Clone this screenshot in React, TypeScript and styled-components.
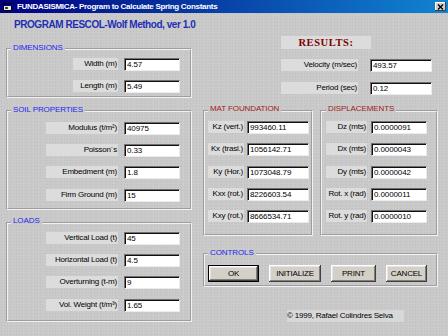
import styled, { createGlobalStyle } from 'styled-components';

interface IField {
  label: string;
  value: string;
}

const GlobalStyle = createGlobalStyle`
  html, body {
    margin: 0;
    padding: 0;
    background-color: #c9c9c9;
  }
  body {
    font-family: 'Liberation Sans', Arial, sans-serif;
  }
`;

const Window = styled.div`
  width: 448px;
  height: 336px;
  display: flex;
  flex-direction: column;
  overflow: hidden;
  background-color: #c9c9c9;
  background-image: radial-gradient(rgba(0, 0, 0, 0.05) 0.8px, transparent 1px),
    radial-gradient(rgba(255, 255, 255, 0.12) 0.8px, transparent 1px);
  background-size: 3px 3px, 5px 4px;
  background-position: 0 0, 1px 2px;
`;

const TitleBar = styled.div`
  flex: 0 0 13px;
  display: flex;
  align-items: center;
  gap: 5px;
  padding: 0 2px 0 3px;
  background: linear-gradient(to right, #000080, #1084d0);
  color: #fff;
  font-size: 8px;
  font-weight: bold;
  letter-spacing: -0.3px;
  white-space: nowrap;
`;

const TitleText = styled.span`
  flex: 1;
  line-height: 13px;
`;

const CloseButton = styled.div`
  width: 11px;
  height: 9px;
  display: flex;
  align-items: center;
  justify-content: center;
  background-color: #d4d0c8;
  box-shadow: inset -1px -1px #404040, inset 1px 1px #fff;
`;

const Body = styled.div`
  flex: 1;
  display: flex;
  gap: 11px;
  padding: 6px 10px 0 6px;
`;

const LeftColumn = styled.div`
  width: 186px;
  display: flex;
  flex-direction: column;
`;

const RightColumn = styled.div`
  width: 235px;
  display: flex;
  flex-direction: column;
`;

const Heading = styled.div`
  margin-left: 8px;
  height: 12px;
  line-height: 12px;
  font-size: 10px;
  font-weight: bold;
  letter-spacing: -0.45px;
  color: #1f2fb5;
  white-space: nowrap;
`;

const Group = styled.fieldset<{
  $mt: number;
  $pad: string;
  $gap: number;
  $align: string;
  $w?: number;
}>`
  margin: ${(props) => props.$mt}px 0 0;
  padding: ${(props) => props.$pad};
  width: ${(props) => (props.$w ? `${props.$w}px` : 'auto')};
  box-sizing: border-box;
  min-width: 0;
  border: 2px groove #f2f2f2;
  display: flex;
  flex-direction: column;
  align-items: ${(props) => props.$align};
  gap: ${(props) => props.$gap}px;
`;

const Legend = styled.legend<{ $color: string }>`
  margin: 0;
  padding: 0 2px 4px;
  font-size: 8px;
  line-height: 9px;
  letter-spacing: -0.1px;
  color: ${(props) => props.$color};
`;

const Row = styled.div<{ $gap: number }>`
  display: flex;
  align-items: flex-start;
  gap: ${(props) => props.$gap}px;
`;

const FieldLabel = styled.div<{ $w: number }>`
  width: ${(props) => props.$w}px;
  height: 12px;
  box-sizing: border-box;
  padding-right: 1px;
  background-color: #dcdcdc;
  text-align: right;
  line-height: 12px;
  font-size: 8px;
  letter-spacing: -0.2px;
  color: #000;
  white-space: nowrap;
  overflow: hidden;
`;

const Field = styled.input<{ $w: number }>`
  width: ${(props) => props.$w}px;
  height: 13px;
  box-sizing: border-box;
  margin: 0;
  padding: 0 0 0 2px;
  border: 1px solid;
  border-color: #707070 #ececec #ececec #707070;
  box-shadow: inset 1px 1px 0 #101010;
  background-color: #fff;
  font-family: 'Liberation Sans', Arial, sans-serif;
  font-size: 8px;
  letter-spacing: -0.1px;
  color: #000;
  outline: none;
`;

const Results = styled.div`
  margin: 17px 0 0 78px;
  display: flex;
  flex-direction: column;
  gap: 10px;
`;

const ResultsTitle = styled.div`
  width: 90px;
  height: 13px;
  background-color: #dcdcdc;
  text-align: center;
  line-height: 13px;
  font-family: 'Liberation Serif', 'Times New Roman', serif;
  font-size: 10.5px;
  font-weight: bold;
  letter-spacing: 0.6px;
  color: #800000;
`;

const GroupsRow = styled.div`
  margin-top: 9px;
  display: flex;
  gap: 7px;
`;

const Buttons = styled.div`
  display: flex;
  gap: 10px;
`;

const Button = styled.button<{ $w: number; $default?: boolean }>`
  width: ${(props) => props.$w}px;
  height: 17px;
  margin: 0;
  padding: 0;
  box-sizing: border-box;
  border: ${(props) => (props.$default ? '1px solid #000' : 'none')};
  background-color: #d4d0c8;
  box-shadow: inset -1px -1px #404040, inset 1px 1px #fff,
    inset -2px -2px #808080, inset 2px 2px #e4e4e4;
  font-family: 'Liberation Sans', Arial, sans-serif;
  font-size: 8px;
  letter-spacing: -0.2px;
  color: #000;
`;

const Copyright = styled.div`
  margin: 23px 0 0 84px;
  width: 117px;
  height: 12px;
  line-height: 12px;
  background-color: #d8d8d8;
  font-size: 8px;
  letter-spacing: -0.2px;
  color: #000;
  white-space: nowrap;
`;

const dimensions: IField[] = [
  { label: 'Width (m)', value: '4.57' },
  { label: 'Length (m)', value: '5.49' },
];

const results: IField[] = [
  { label: 'Velocity (m/sec)', value: '493.57' },
  { label: 'Period (sec)', value: '0.12' },
];

const soil: IField[] = [
  { label: 'Modulus (t/m²)', value: '40975' },
  { label: 'Poisson´s', value: '0.33' },
  { label: 'Embedment (m)', value: '1.8' },
  { label: 'Firm Ground (m)', value: '15' },
];

const loads: IField[] = [
  { label: 'Vertical Load (t)', value: '45' },
  { label: 'Horizontal Load (t)', value: '4.5' },
  { label: 'Overturning (t-m)', value: '9' },
  { label: 'Vol. Weight (t/m³)', value: '1.65' },
];

const mat: IField[] = [
  { label: 'Kz (vert.)', value: '993460.11' },
  { label: 'Kx (trasl.)', value: '1056142.71' },
  { label: 'Ky (Hor.)', value: '1073048.79' },
  { label: 'Kxx (rot.)', value: '8226603.54' },
  { label: 'Kxy (rot.)', value: '8666534.71' },
];

const displacements: IField[] = [
  { label: 'Dz (mts)', value: '0.0000091' },
  { label: 'Dx (mts)', value: '0.0000043' },
  { label: 'Dy (mts)', value: '0.0000042' },
  { label: 'Rot. x (rad)', value: '0.0000011' },
  { label: 'Rot. y (rad)', value: '0.0000010' },
];

const BLUE = '#2626f2';
const RED = '#a01c1c';
const ROW_GAP = 9.33;

function renderRows(
  fields: IField[],
  labelWidth: number,
  fieldWidth: number,
  gap: number
) {
  return fields.map((field) => (
    <Row key={field.label} $gap={gap}>
      <FieldLabel $w={labelWidth}>{field.label}</FieldLabel>
      <Field $w={fieldWidth} readOnly defaultValue={field.value} />
    </Row>
  ));
}

function App() {
  return (
    <>
      <GlobalStyle />
      <Window>
        <TitleBar>
          <svg width="9" height="8" viewBox="0 0 9 8">
            <rect x="0.5" y="0.5" width="8" height="7" fill="#e8e8e8" stroke="#000" />
            <rect x="1" y="1" width="7" height="2" fill="#000080" />
            <rect x="2" y="4" width="3" height="2" fill="#404040" />
          </svg>
          <TitleText>FUNDASISMICA- Program to Calculate Spring Constants</TitleText>
          <CloseButton>
            <svg width="7" height="6" viewBox="0 0 7 6">
              <path d="M1 0.5 L6 5.5 M6 0.5 L1 5.5" stroke="#000" strokeWidth="1.4" />
            </svg>
          </CloseButton>
        </TitleBar>

        <Body>
          <LeftColumn>
            <Heading>PROGRAM RESCOL-Wolf Method, ver 1.0</Heading>

            <Group $mt={11.5} $pad="2.5px 10px 2.5px 3px" $gap={ROW_GAP} $align="flex-end">
              <Legend $color={BLUE}>DIMENSIONS</Legend>
              {renderRows(dimensions, 45, 56, 6)}
            </Group>

            <Group $mt={7} $pad="4px 10px 6px 3px" $gap={ROW_GAP} $align="flex-end">
              <Legend $color={BLUE}>SOIL PROPERTIES</Legend>
              {renderRows(soil, 72, 56, 6)}
            </Group>

            <Group $mt={6.5} $pad="2.5px 10px 8px 3px" $gap={ROW_GAP} $align="flex-end">
              <Legend $color={BLUE}>LOADS</Legend>
              {renderRows(loads, 72, 56, 6)}
            </Group>
          </LeftColumn>

          <RightColumn>
            <Results>
              <ResultsTitle>RESULTS:</ResultsTitle>
              {renderRows(results, 77, 62, 12)}
            </Results>

            <GroupsRow>
              <Group $mt={0} $w={110} $pad="4px 2px 11px 3px" $gap={ROW_GAP} $align="flex-start">
                <Legend $color={RED}>MAT FOUNDATION</Legend>
                {renderRows(mat, 36, 62, 3)}
              </Group>
              <Group $mt={0} $w={118} $pad="4px 2px 11px 4px" $gap={ROW_GAP} $align="flex-start">
                <Legend $color={RED}>DISPLACEMENTS</Legend>
                {renderRows(displacements, 41, 56, 4)}
              </Group>
            </GroupsRow>

            <Group $mt={11.5} $pad="4.5px 2px 3px 3px" $gap={0} $align="flex-start">
              <Legend $color={BLUE}>CONTROLS</Legend>
              <Buttons>
                <Button $w={51} $default>OK</Button>
                <Button $w={52}>INITIALIZE</Button>
                <Button $w={45}>PRINT</Button>
                <Button $w={41}>CANCEL</Button>
              </Buttons>
            </Group>

            <Copyright>© 1999, Rafael Colindres Selva</Copyright>
          </RightColumn>
        </Body>
      </Window>
    </>
  );
}

export default App;
